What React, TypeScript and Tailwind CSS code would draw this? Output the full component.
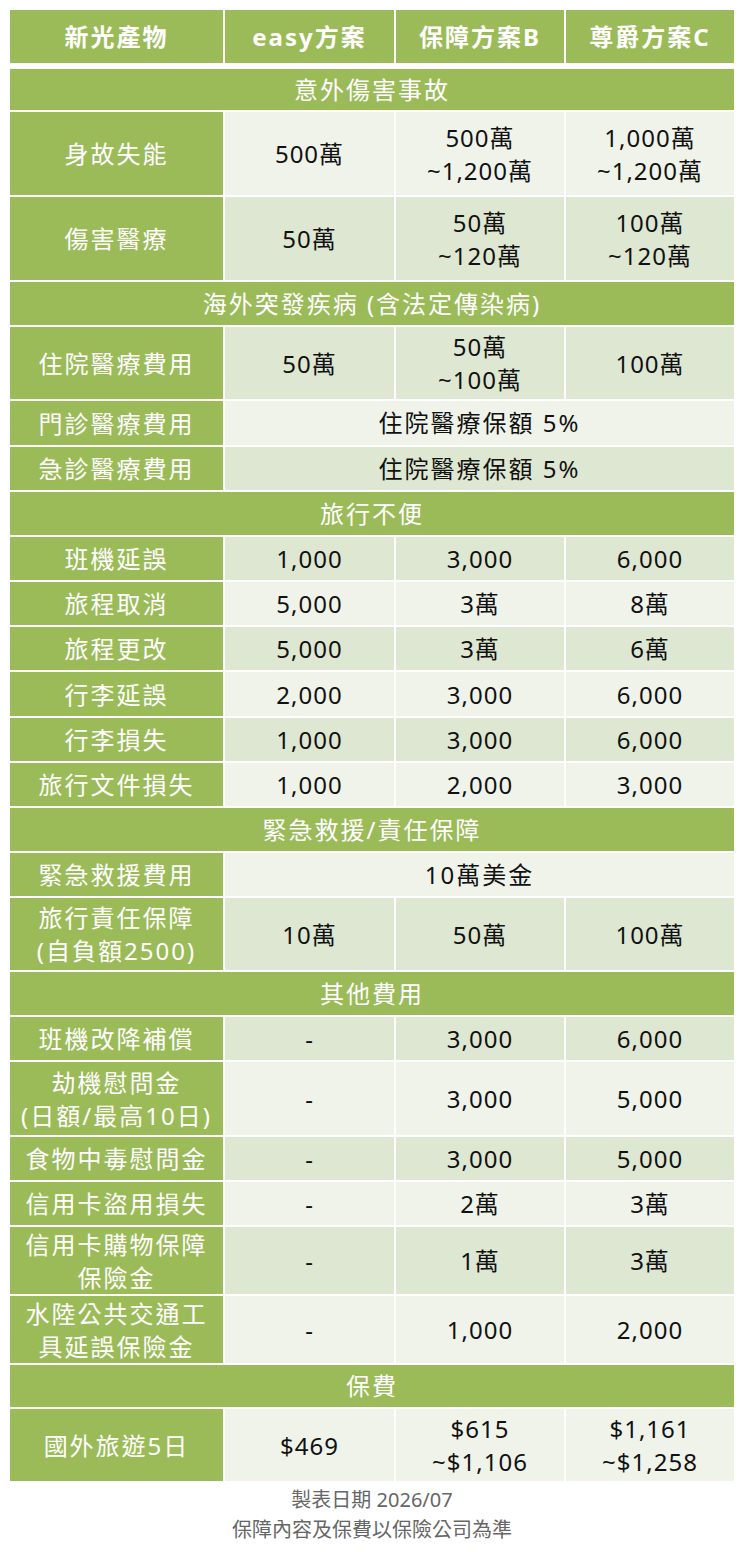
import React from "react";

type Row =
  | { kind: "section"; title: string; h: string }
  | { kind: "data"; label: string[]; values: string[][]; h: string; shade: "light" | "dark" }
  | { kind: "merged"; label: string[]; value: string; h: string; shade: "light" | "dark" };

const rows: Row[] = [
  { kind: "section", title: "意外傷害事故", h: "h-[41px]" },
  { kind: "data", label: ["身故失能"], values: [["500萬"], ["500萬", "~1,200萬"], ["1,000萬", "~1,200萬"]], h: "h-[83px]", shade: "light" },
  { kind: "data", label: ["傷害醫療"], values: [["50萬"], ["50萬", "~120萬"], ["100萬", "~120萬"]], h: "h-[83px]", shade: "dark" },
  { kind: "section", title: "海外突發疾病 (含法定傳染病)", h: "h-[43px]" },
  { kind: "data", label: ["住院醫療費用"], values: [["50萬"], ["50萬", "~100萬"], ["100萬"]], h: "h-[72px]", shade: "dark" },
  { kind: "merged", label: ["門診醫療費用"], value: "住院醫療保額 5%", h: "h-[44px]", shade: "light" },
  { kind: "merged", label: ["急診醫療費用"], value: "住院醫療保額 5%", h: "h-[43px]", shade: "dark" },
  { kind: "section", title: "旅行不便", h: "h-[43px]" },
  { kind: "data", label: ["班機延誤"], values: [["1,000"], ["3,000"], ["6,000"]], h: "h-[43px]", shade: "dark" },
  { kind: "data", label: ["旅程取消"], values: [["5,000"], ["3萬"], ["8萬"]], h: "h-[43px]", shade: "light" },
  { kind: "data", label: ["旅程更改"], values: [["5,000"], ["3萬"], ["6萬"]], h: "h-[43px]", shade: "dark" },
  { kind: "data", label: ["行李延誤"], values: [["2,000"], ["3,000"], ["6,000"]], h: "h-[44px]", shade: "light" },
  { kind: "data", label: ["行李損失"], values: [["1,000"], ["3,000"], ["6,000"]], h: "h-[43px]", shade: "dark" },
  { kind: "data", label: ["旅行文件損失"], values: [["1,000"], ["2,000"], ["3,000"]], h: "h-[43px]", shade: "light" },
  { kind: "section", title: "緊急救援/責任保障", h: "h-[43px]" },
  { kind: "merged", label: ["緊急救援費用"], value: "10萬美金", h: "h-[43px]", shade: "light" },
  { kind: "data", label: ["旅行責任保障", "(自負額2500)"], values: [["10萬"], ["50萬"], ["100萬"]], h: "h-[72px]", shade: "dark" },
  { kind: "section", title: "其他費用", h: "h-[43px]" },
  { kind: "data", label: ["班機改降補償"], values: [["-"], ["3,000"], ["6,000"]], h: "h-[43px]", shade: "dark" },
  { kind: "data", label: ["劫機慰問金", "(日額/最高10日)"], values: [["-"], ["3,000"], ["5,000"]], h: "h-[73px]", shade: "light" },
  { kind: "data", label: ["食物中毒慰問金"], values: [["-"], ["3,000"], ["5,000"]], h: "h-[43px]", shade: "dark" },
  { kind: "data", label: ["信用卡盜用損失"], values: [["-"], ["2萬"], ["3萬"]], h: "h-[43px]", shade: "light" },
  { kind: "data", label: ["信用卡購物保障", "保險金"], values: [["-"], ["1萬"], ["3萬"]], h: "h-[67px]", shade: "dark" },
  { kind: "data", label: ["水陸公共交通工", "具延誤保險金"], values: [["-"], ["1,000"], ["2,000"]], h: "h-[67px]", shade: "light" },
  { kind: "section", title: "保費", h: "h-[42px]" },
  { kind: "data", label: ["國外旅遊5日"], values: [["$469"], ["$615", "~$1,106"], ["$1,161", "~$1,258"]], h: "h-[72px]", shade: "light" },
];

const shadeClass = (s: "light" | "dark") => (s === "light" ? "bg-[#eff3ea]" : "bg-[#dee7d1]");

const Lines = ({ lines }: { lines: string[] }) => (
  <div className="flex flex-col items-center leading-[33px]">
    {lines.map((l, i) => (
      <span key={i}>{l}</span>
    ))}
  </div>
);

const App = () => {
  return (
    <div
      className="w-[744px] min-h-[1552px] bg-white px-[10px] pt-[10px] text-[24px] tracking-[2px] whitespace-nowrap"
      style={{ fontFamily: '"Noto Sans", "Noto Sans CJK TC", sans-serif' }}
    >
      <div className="flex flex-col gap-[2px]">
        {/* header */}
        <div className="grid grid-cols-[213px_169px_168px_168px] gap-x-[2px] h-[53px] mb-[4px] font-bold text-white">
          {["新光產物", "easy方案", "保障方案B", "尊爵方案C"].map((t) => (
            <div key={t} className="bg-[#9bbb59] flex items-center justify-center">
              {t}
            </div>
          ))}
        </div>

        {rows.map((row, i) => {
          if (row.kind === "section") {
            return (
              <div key={i} className={`bg-[#9bbb59] text-white flex items-center justify-center ${row.h}`}>
                {row.title}
              </div>
            );
          }
          return (
            <div key={i} className={`grid grid-cols-[213px_169px_168px_168px] gap-x-[2px] ${row.h}`}>
              <div className="bg-[#9bbb59] text-white flex items-center justify-center">
                <Lines lines={row.label} />
              </div>
              {row.kind === "merged" ? (
                <div className={`col-span-3 flex items-center justify-center text-[#111] ${shadeClass(row.shade)}`}>
                  {row.value}
                </div>
              ) : (
                row.values.map((v, j) => (
                  <div key={j} className={`flex items-center justify-center text-[#111] tracking-[1px] ${shadeClass(row.shade)}`}>
                    <Lines lines={v} />
                  </div>
                ))
              )}
            </div>
          );
        })}
      </div>

      <div className="flex flex-col items-center pt-[4px] text-[20px] leading-[30px] tracking-normal text-[#666]">
        <p>製表日期 2026/07</p>
        <p>保障內容及保費以保險公司為準</p>
      </div>
    </div>
  );
};

export default App;
